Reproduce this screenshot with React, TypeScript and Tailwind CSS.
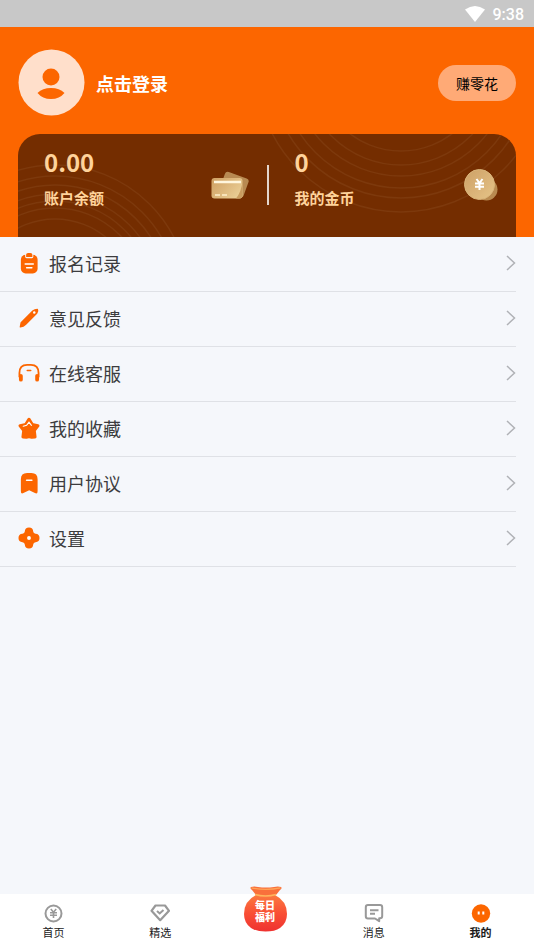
import type { ReactNode } from "react";

const menuItems: { title: string; icon: ReactNode }[] = [
  {
    title: "报名记录",
    icon: (
      <>
        <rect x="3" y="3" width="17.500" height="19.500" rx="5" fill="#fc6600" />
        <path d="M7.500 0h8.500v5q0 1.500-1.500 1.500H9Q7.500 6.500 7.500 5z" fill="#f5f7fb" />
        <path d="M8.500 3q0-2 2-2h2.500q2 0 2 2v2.300H8.500z" fill="#fc6600" />
        <path d="M7.500 12.500h8.500M9 16.500h5.500" stroke="#fff" strokeWidth="1.500" strokeLinecap="round" />
      </>
    ),
  },
  {
    title: "意见反馈",
    icon: (
      <>
        <path
          d="M2.500 20.800l.8-4.300L15.500 4.200q2-1.700 4.700-1.700 1 2-.7 4L8 18q-2.300 2.400-5.500 2.800z"
          fill="#fc6600"
          stroke="#fc6600"
          strokeWidth="1.500"
          strokeLinejoin="round"
        />
        <circle cx="17" cy="5.800" r="1.300" fill="#fff" />
      </>
    ),
  },
  {
    title: "在线客服",
    icon: (
      <>
        <path d="M1.500 16v-4.500q0-8.500 8-8.500h4q8 0 8 8.500V16" fill="none" stroke="#fc6600" strokeWidth="1.900" />
        <path d="M3 14.500v4M20 14.500v4" stroke="#fc6600" strokeWidth="4" strokeLinecap="round" />
        <path d="M9.700 9h3.600" stroke="#fc6600" strokeWidth="1.600" strokeLinecap="round" />
      </>
    ),
  },
  {
    title: "我的收藏",
    icon: (
      <>
        <path
          d="M11.500 2.500l3.200 5.300 6 1.400-3.800 4.800.8 6.800-3.200.2q-3-1-6 0l-3.200-.2.800-6.800-3.800-4.800 6-1.400z"
          fill="#fc6600"
          stroke="#fc6600"
          strokeWidth="3.400"
          strokeLinejoin="round"
        />
        <path d="M5.500 9.700l3.500-1 2.500-3.200L14 8.700" fill="none" stroke="#fff" strokeWidth="1.200" strokeLinecap="round" />
      </>
    ),
  },
  {
    title: "用户协议",
    icon: (
      <>
        <path d="M3 7.500Q3 1 9.500 1h4.500Q20.500 1 20.500 7.500V20q0 3.500-2.800 2l-6-3-6 3Q3 23.500 3 20z" fill="#fc6600" />
        <path d="M9 8.700h5.500" stroke="#fff" strokeWidth="1.600" strokeLinecap="round" />
      </>
    ),
  },
  {
    title: "设置",
    icon: (
      <>
        <path
          d="M11.500 .5q4.200 0 4.400 4.200.2 2.100 2.400 2.400 4.200.3 4.200 4.400t-4.200 4.400q-2.200.3-2.400 2.400-.2 4.200-4.400 4.200t-4.400-4.200q-.2-2.100-2.400-2.400Q.5 15.600.5 11.500t4.200-4.400q2.200-.3 2.400-2.400Q7.300.5 11.500.5z"
          fill="#fc6600"
        />
        <circle cx="11.500" cy="11.500" r="2" fill="#fff" />
      </>
    ),
  },
];

const bottomRings = [80, 91, 98, 105, 114, 123, 134];
const topRings = [84, 98, 109, 121, 131, 145];

function Tab({ title, icon, active }: { title: string; icon: ReactNode; active?: boolean }) {
  return (
    <button
      className={
        active
          ? "flex flex-1 flex-col items-center pt-[9px] text-[11px] leading-[18px] font-bold text-[#1b1b1b]"
          : "flex flex-1 flex-col items-center pt-[9px] text-[11px] leading-[18px] text-[#1b1b1b]"
      }
    >
      <svg width="20" height="20" viewBox="0 0 20 20" fill="none" stroke="#999" strokeWidth="2">
        {icon}
      </svg>
      {title}
    </button>
  );
}

function StatusBar() {
  return (
    <div className="flex h-[27px] items-center justify-end gap-2 bg-[#c8c8c8] pr-2.5 text-white">
      <svg width="20" height="16" viewBox="0 0 20 16" fill="currentColor">
        <path d="M0 3.500Q10-3.500 20 3.500L10 16z" />
      </svg>
      <span className="pt-0.5 font-['Roboto',sans-serif] text-base leading-5 font-medium">9:38</span>
    </div>
  );
}

function CardsIcon() {
  return (
    <svg width="38" height="30" viewBox="0 0 38 30">
      <defs>
        <linearGradient id="card" x1="0" y1="0" x2="1" y2="0.600">
          <stop offset="0" stopColor="#cf9f62" />
          <stop offset="1" stopColor="#e9cc93" />
        </linearGradient>
      </defs>
      <rect x="11" y="4.500" width="25" height="20" rx="3" fill="#b88a52" transform="rotate(20 23 14)" />
      <rect x="0.500" y="8" width="31" height="20.500" rx="3" fill="url(#card)" />
      <path d="M31.500 11v14.500q0 3-3 3h-3.500q5.500-7 6.500-17.500z" fill="#c99d60" />
      <path d="M3 12h27" stroke="#fff6dd" strokeWidth="2.500" />
      <path d="M4 25h5M11 25h5" stroke="#fff0cc" strokeWidth="1.500" />
    </svg>
  );
}

function CoinIcon() {
  return (
    <svg width="36" height="34" viewBox="0 0 36 34">
      <defs>
        <linearGradient id="coin" x1="0" y1="0" x2="1" y2="1">
          <stop offset="0" stopColor="#cda066" />
          <stop offset="1" stopColor="#e6c488" />
        </linearGradient>
      </defs>
      <circle cx="23.500" cy="21.500" r="11" fill="#b98a50" />
      <circle cx="16.500" cy="16.500" r="15" fill="url(#coin)" stroke="#d9b47a" />
      <path d="M13.500 11l3 4 3-4M16.500 15v7M12 15.500h9M12 18.800h9" fill="none" stroke="#fff" strokeWidth="2" />
    </svg>
  );
}

function MoneyBag() {
  return (
    <button className="relative w-12 self-start pt-1.5">
      <svg className="absolute -top-2 left-0" width="48" height="46" viewBox="0 0 48 46">
        <defs>
          <linearGradient id="bag" x1="0" y1="0" x2="0" y2="1">
            <stop offset="0" stopColor="#fb7a40" />
            <stop offset="0.500" stopColor="#f94f35" />
            <stop offset="1" stopColor="#ef3230" />
          </linearGradient>
        </defs>
        <path d="M8 1q3-1 7 0 8 1 16 0 4-1 7 0 1.500 1-1 3l-4 5H13L9 4Q6.500 2 8 1z" fill="#f9703b" />
        <path d="M13 9h19q12 6 12 19 0 9-7 14-5 3.500-14.500 3.500T8 42q-7-5-7-14Q1 15 13 9z" fill="url(#bag)" />
        <path d="M8.500 1.800q14.500 3 29 0" fill="none" stroke="#ffa458" strokeWidth="1.200" />
        <path d="M12 8.500q10.500 3 21 0" fill="none" stroke="#ffb45c" strokeWidth="1.500" />
      </svg>
      <span className="relative block pr-1 text-center font-['Liberation_Sans','Noto_Sans_CJK_SC',sans-serif] text-[10px] leading-3 font-black text-white">
        每日
        <br />
        福利
      </span>
    </button>
  );
}

export default function App() {
  return (
    <div className="flex min-h-screen flex-col bg-[#f5f7fb] font-['Noto_Sans_CJK_SC',sans-serif]">
      <StatusBar />
      <header className="bg-[#fc6600] px-[18px] pt-[22px]">
        <div className="flex items-center">
          <svg width="67" height="67" viewBox="0 0 67 67">
            <circle cx="33.500" cy="33.500" r="33" fill="#ffdfcb" />
            <circle cx="33" cy="28" r="8.500" fill="#fc6600" />
            <path d="M19.500 44q5-5 13.500-5T46.500 44q-5 6-13.500 6t-13.500-6z" fill="#fc6600" />
          </svg>
          <button className="ml-[11px] text-lg leading-6 font-bold text-white">点击登录</button>
          <button className="ml-auto h-9 rounded-full bg-[#ffaa76] px-[18px] text-sm text-black">赚零花</button>
        </div>

        <section className="relative mt-[18px] flex h-[103px] items-start overflow-hidden rounded-t-[22px] bg-[#742d00] text-[#ffd39b]">
          <svg className="absolute inset-0 h-full w-full" fill="none" stroke="#7d390c" strokeWidth="1.500">
            {bottomRings.map((r) => (
              <circle key={r} cx="37" cy="165" r={r} />
            ))}
            {topRings.map((r) => (
              <circle key={r} cx="383" cy="-67" r={r} />
            ))}
          </svg>
          <div className="relative flex h-full flex-1 justify-between pr-[18px] pl-[26px]">
            <div className="pt-3">
              <p className="text-2xl leading-8 font-bold">0.00</p>
              <p className="mt-2.5 text-[15px] leading-5 font-bold">账户余额</p>
            </div>
            <div className="pt-9">
              <CardsIcon />
            </div>
          </div>
          <div className="relative mt-[31px] h-10 w-0.5 bg-[#e4d6cc]" />
          <div className="relative flex h-full flex-1 justify-between pr-[17px] pl-[26px]">
            <div className="pt-3">
              <p className="text-2xl leading-8 font-bold">0</p>
              <p className="mt-2.5 text-[15px] leading-5 font-bold">我的金币</p>
            </div>
            <div className="pt-[34px]">
              <CoinIcon />
            </div>
          </div>
        </section>
      </header>

      <main className="flex-1 pr-[18px]">
        {menuItems.map((item) => (
          <button
            key={item.title}
            className="flex h-[55px] w-full items-center border-b border-[#dfe1e6] pb-0.5 pl-[18px] text-lg text-[#3c3c3e]"
          >
            <svg width="22" height="22" viewBox="0 0 23 23">
              {item.icon}
            </svg>
            <span className="ml-[9px]">{item.title}</span>
            <svg className="ml-auto" width="10" height="16" viewBox="0 0 10 16" fill="none" stroke="#b0b2b6" strokeWidth="1.500">
              <path d="M1 1l7.500 7L1 15" />
            </svg>
          </button>
        ))}
      </main>

      <nav className="flex h-[55px] bg-white">
        <Tab
          title="首页"
          icon={
            <>
              <circle cx="10.500" cy="10.500" r="8" />
              <path d="M7.800 6l2.700 3.200L13.200 6M10.500 9v6M7 9.700h7M7 12.300h7" strokeWidth="1.600" />
            </>
          }
        />
        <Tab
          title="精选"
          icon={
            <>
              <path d="M5.500 2.500h9.500l4 5.300-8.800 9.400L1.500 7.800z" strokeLinejoin="round" strokeWidth="2.200" />
              <path d="M7 8l2.700 2.500L13.500 7" />
            </>
          }
        />
        <div className="flex flex-1 justify-center">
          <MoneyBag />
        </div>
        <Tab
          title="消息"
          icon={
            <>
              <path
                d="M4 2h12q2.200 0 2.200 2.200V13q0 2.200-2.200 2.200h-.8v3L11 15.500H4q-2.200 0-2.200-2.200V4.200Q1.800 2 4 2z"
                strokeLinejoin="round"
              />
              <path d="M6 7.200h8.500M6 10.700h5" />
            </>
          }
        />
        <Tab
          title="我的"
          active
          icon={
            <>
              <circle cx="10" cy="10.500" r="9.200" fill="#fc6600" stroke="none" />
              <path d="M7.700 8.500v3M12.300 8.500v3" stroke="#fff" />
            </>
          }
        />
      </nav>
    </div>
  );
}
